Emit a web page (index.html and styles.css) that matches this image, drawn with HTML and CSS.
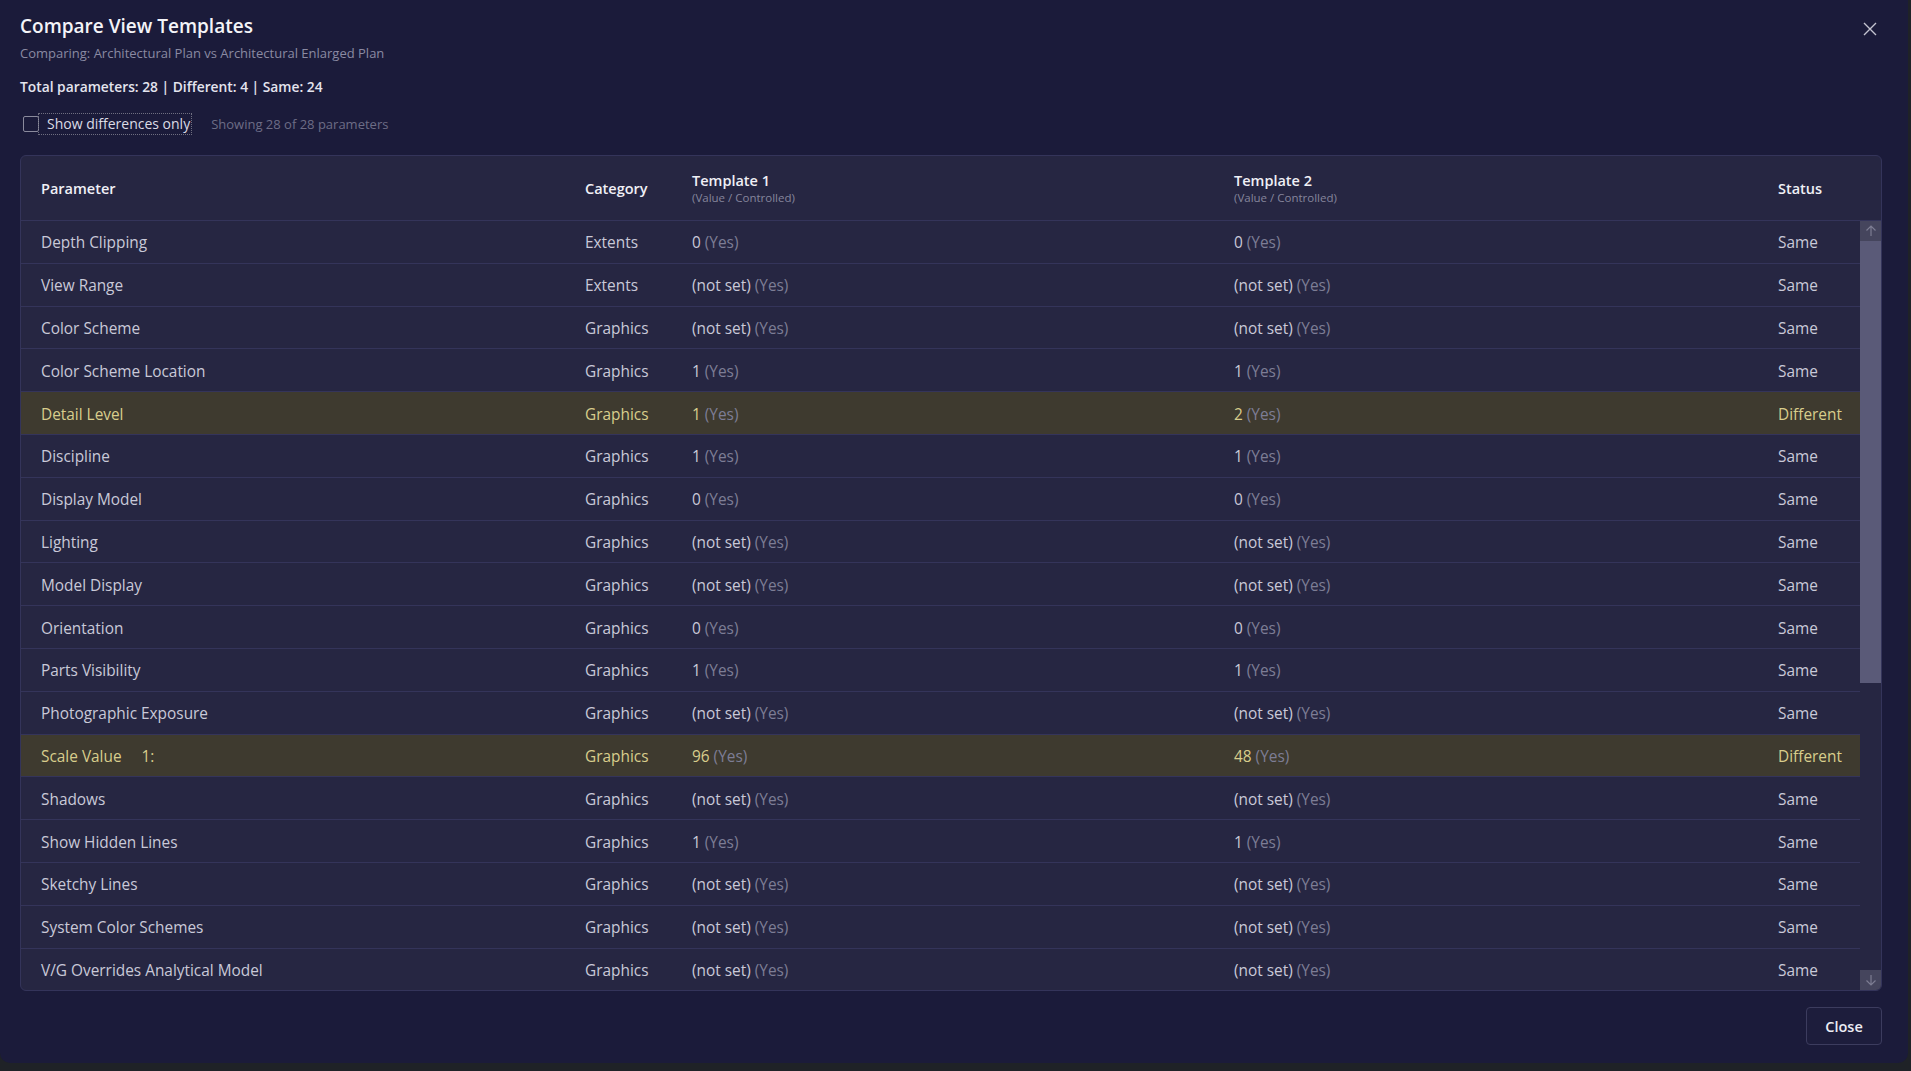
FILE: index.html
```html
<!DOCTYPE html>
<html lang="en">
<head>
    <meta charset="UTF-8">
    <meta name="viewport" content="width=device-width, initial-scale=1.0">
    <title>Compare View Templates</title>
    <link rel="stylesheet" href="styles.css">
</head>
<body>
    <div class="dialog">
        <div class="dialog-head">
            <h2 class="title">Compare View Templates</h2>
            <button class="close-x" title="Close">
                <svg width="14" height="14" viewBox="0 0 14 14"><path d="M1 1L13 13M13 1L1 13" stroke="#c4c4d0" stroke-width="1.4" fill="none"/></svg>
            </button>
        </div>
        <div class="subtitle">Comparing: Architectural Plan vs Architectural Enlarged Plan</div>
        <div class="summary">Total parameters: 28 | Different: 4 | Same: 24</div>
        <div class="filter-row">
            <span class="checkbox"></span>
            <span class="check-label">Show differences only</span>
            <span class="showing">Showing 28 of 28 parameters</span>
        </div>

        <div class="grid-box">
            <div class="grid-row grid-header">
                <div>Parameter</div>
                <div>Category</div>
                <div class="two-line">Template 1<small>(Value / Controlled)</small></div>
                <div class="two-line">Template 2<small>(Value / Controlled)</small></div>
                <div>Status</div>
            </div>
            <div class="grid-body">
                <div class="rows" id="rows"></div>
                <div class="scrollbar">
                    <div class="sb-btn">
                        <svg width="12" height="12" viewBox="0 0 12 12"><path d="M6 11V1M1.5 5.5L6 1l4.5 4.5" stroke="#7c7c92" stroke-width="1.2" fill="none"/></svg>
                    </div>
                    <div class="sb-track"><div class="sb-thumb"></div></div>
                    <div class="sb-btn">
                        <svg width="12" height="12" viewBox="0 0 12 12"><path d="M6 1v10M1.5 6.5L6 11l4.5-4.5" stroke="#7c7c92" stroke-width="1.2" fill="none"/></svg>
                    </div>
                </div>
            </div>
        </div>

        <div class="footer">
            <button class="close-button">Close</button>
        </div>
    </div>
    <script>
        // parameter, category, template 1, template 2
        var params = [
            ['Depth Clipping', 'Extents', '0', '0'],
            ['View Range', 'Extents', '(not set)', '(not set)'],
            ['Color Scheme', 'Graphics', '(not set)', '(not set)'],
            ['Color Scheme Location', 'Graphics', '1', '1'],
            ['Detail Level', 'Graphics', '1', '2'],
            ['Discipline', 'Graphics', '1', '1'],
            ['Display Model', 'Graphics', '0', '0'],
            ['Lighting', 'Graphics', '(not set)', '(not set)'],
            ['Model Display', 'Graphics', '(not set)', '(not set)'],
            ['Orientation', 'Graphics', '0', '0'],
            ['Parts Visibility', 'Graphics', '1', '1'],
            ['Photographic Exposure', 'Graphics', '(not set)', '(not set)'],
            ['Scale Value&nbsp;&nbsp;&nbsp;&nbsp; 1:', 'Graphics', '96', '48'],
            ['Shadows', 'Graphics', '(not set)', '(not set)'],
            ['Show Hidden Lines', 'Graphics', '1', '1'],
            ['Sketchy Lines', 'Graphics', '(not set)', '(not set)'],
            ['System Color Schemes', 'Graphics', '(not set)', '(not set)'],
            ['V/G Overrides Analytical Model', 'Graphics', '(not set)', '(not set)']
        ];

        var html = '';
        params.forEach(function(p) {
            var diff = p[2] !== p[3];
            html += '<div class="grid-row' + (diff ? ' diff' : '') + '">' +
                '<div>' + p[0] + '</div>' +
                '<div>' + p[1] + '</div>' +
                '<div>' + p[2] + ' <span class="ctl">(Yes)</span></div>' +
                '<div>' + p[3] + ' <span class="ctl">(Yes)</span></div>' +
                '<div>' + (diff ? 'Different' : 'Same') + '</div>' +
                '</div>';
        });
        document.getElementById('rows').innerHTML = html;
    </script>
</body>
</html>
```

FILE: styles.css
```css
body {
    margin: 0;
    padding: 0;
    background-color: #1f2227;
    font-family: "Open Sans", "Noto Sans", sans-serif;
    color: #c9c9d8;
    overflow: hidden;
}
.dialog {
    width: 1908px;
    height: 1063px;
    box-sizing: border-box;
    background-color: #1b1b3a;
    border-radius: 0 0 10px 10px;
    padding: 13px 26px 0 20px;
}
.dialog-head {
    display: flex;
    justify-content: space-between;
    align-items: center;
}
.title {
    margin: 0;
    font-size: 19px;
    line-height: 27px;
    font-weight: 600;
    color: #f4f4f8;
}
.close-x {
    background: none;
    border: none;
    padding: 0;
    margin-top: 4px;
    margin-right: 5px;
    display: flex;
}
.subtitle {
    margin-top: 4px;
    font-size: 13px;
    line-height: 18px;
    color: #8a8aa2;
}
.summary {
    margin-top: 15px;
    font-size: 13.8px;
    line-height: 20px;
    font-weight: 600;
    color: #e4e4ee;
}
.filter-row {
    margin-top: 16px;
    display: flex;
    align-items: center;
    height: 22px;
}
.checkbox {
    width: 14px;
    height: 14px;
    border: 1px solid #8a8a9c;
    border-radius: 2px;
    margin-left: 3px;
}
.check-label {
    padding: 0 1px 0 8px;
    font-size: 14px;
    line-height: 20px;
    color: #dcdce6;
    outline: 1px dotted #6f6f80;
}
.showing {
    margin-left: 20px;
    font-size: 13px;
    color: #6d6d86;
}
.grid-box {
    margin-top: 20px;
    border: 1px solid #34345a;
    border-radius: 6px;
    background-color: #262642;
    overflow: hidden;
}
.grid-row {
    display: grid;
    grid-template-columns: 544px 107px 542px 544px 1fr;
    align-items: center;
    padding: 2px 0 0 20px;
    height: 42.8px;
    box-sizing: border-box;
    border-top: 1px solid #34345a;
    font-size: 15.4px;
    white-space: nowrap;
}
.grid-header {
    height: 64px;
    padding-top: 0;
    border-top: none;
    font-weight: 600;
    font-size: 14.5px;
    color: #f0f0f6;
}
.two-line {
    display: flex;
    flex-direction: column;
    line-height: 19px;
}
.two-line small {
    font-size: 11.5px;
    line-height: 15px;
    font-weight: 400;
    color: #85859c;
}
.grid-body {
    display: flex;
}
.rows {
    flex: 1;
}
.ctl {
    color: #7d7d95;
}
.diff {
    background-color: #3e3a2f;
    color: #d8cd8c;
}
.scrollbar {
    width: 21px;
    display: flex;
    flex-direction: column;
    border-top: 1px solid #34345a;
}
.sb-btn {
    height: 20px;
    background-color: #45455d;
    display: flex;
    align-items: center;
    justify-content: center;
}
.sb-track {
    flex: 1;
}
.sb-thumb {
    height: 442px;
    background-color: #5a5a78;
}
.footer {
    display: flex;
    justify-content: flex-end;
    margin-top: 16px;
}
.close-button {
    width: 76px;
    height: 38px;
    background-color: #1d1d3c;
    border: 1px solid #3c3c5e;
    border-radius: 4px;
    color: #ececf4;
    font-family: "Open Sans", "Noto Sans", sans-serif;
    font-size: 14.5px;
    font-weight: 600;
}
```
